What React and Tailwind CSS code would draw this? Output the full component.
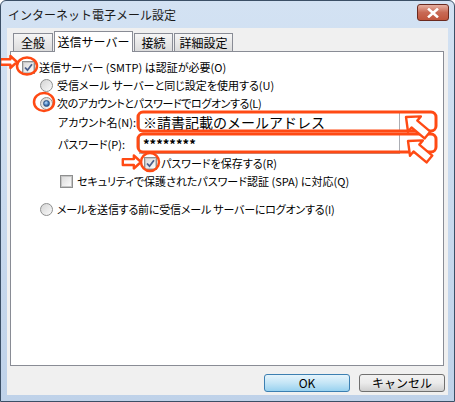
import React from 'react';

const ORANGE = '#ff4a14';

function Check({ checked }) {
  return (
    <span className="relative flex h-[13px] w-[13px] shrink-0 items-center justify-center border border-[#8e8f8f] bg-white">
      <span className="flex h-[11px] w-[11px] items-center justify-center border border-[#c6c6c6] bg-gradient-to-br from-[#dcdcdc] to-[#fbfbfb]">
        {checked && (
          <svg width="9" height="9" viewBox="0 0 9 9">
            <path d="M1 4.5 L3.5 7.2 L8 1.2" fill="none" stroke="#4a5f8c" strokeWidth="1.8" />
          </svg>
        )}
      </span>
    </span>
  );
}

function Radio({ checked }) {
  return (
    <span className="flex h-[13px] w-[13px] shrink-0 items-center justify-center rounded-full border border-[#8e8f8f] bg-gradient-to-br from-[#d4d4d4] to-[#fafafa]">
      {checked && (
        <span className="h-[7px] w-[7px] rounded-full border border-[#2a4f80] bg-[radial-gradient(circle_at_40%_35%,#bfe0ff,#3f78b8_55%,#1c3d66)]" />
      )}
    </span>
  );
}

function Arrow({ x, y, rot, s = 1 }) {
  return (
    <g transform={`translate(${x},${y}) rotate(${rot}) scale(${s})`}>
      <polygon
        points="0,0 11,-10 11,-4.5 28,-4.5 28,4.5 11,4.5 11,10"
        fill="#fff"
        stroke={ORANGE}
        strokeWidth={2.4 / s}
        strokeLinejoin="round"
      />
    </g>
  );
}

export default function App() {
  const jp = "font-['Noto_Sans_CJK_JP',sans-serif]";
  return (
    <div className={`relative h-[402px] w-[455px] overflow-hidden rounded-t-[6px] border border-[#3b4f66] bg-gradient-to-b from-[#d3e2f3] to-[#bfd2e9] ${jp} text-black`}>
      <div className="flex h-[27px] items-center justify-between pl-[7px] pr-[5px]">
        <span className="text-[12px] text-[#1a1a1a]">インターネット電子メール設定</span>
        <div className="mt-[-4px] flex h-[17px] w-[32px] items-center justify-center rounded-[3px] border border-[#6b2a1f] bg-gradient-to-b from-[#e6b0a2] via-[#c86a55] to-[#c0553c]">
          <svg width="12" height="10" viewBox="0 0 12 10">
            <path d="M2 1.5 L10 8.5 M10 1.5 L2 8.5" stroke="#fff" strokeWidth="2.6" strokeLinecap="square" />
          </svg>
        </div>
      </div>

      <div className="mx-[6px] flex h-[367px] flex-col bg-[#f0f0f0]">
        <div className="mt-[3px] flex items-end pl-[6px] text-[12px]">
          <div className="flex h-[18px] w-[40px] items-center justify-center border border-b-0 border-[#898c95] bg-gradient-to-b from-[#f5f5f5] to-[#dcdcdc]">全般</div>
          <div className="relative z-10 -mb-px ml-px flex h-[21px] w-[79px] items-start justify-center border border-b-0 border-[#898c95] bg-white pt-[1px]">送信サーバー</div>
          <div className="ml-px flex h-[18px] w-[39px] items-center justify-center border border-b-0 border-[#898c95] bg-gradient-to-b from-[#f5f5f5] to-[#dcdcdc]">接続</div>
          <div className="ml-px flex h-[18px] w-[59px] items-center justify-center border border-b-0 border-[#898c95] bg-gradient-to-b from-[#f5f5f5] to-[#dcdcdc]">詳細設定</div>
        </div>

        <div className="ml-[3px] flex h-[315px] w-[434px] flex-col whitespace-nowrap border border-[#898c95] bg-white pl-[11px] pt-[6px] text-[11px] [font-feature-settings:'palt']">
          <div className="flex h-[18px] items-center gap-[4px]">
            <Check checked />
            <span>送信サーバー (SMTP) は認証が必要(O)</span>
          </div>
          <div className="flex h-[18px] items-center gap-[4px] pl-[18px]">
            <Radio />
            <span>受信メール サーバーと同じ設定を使用する(U)</span>
          </div>
          <div className="flex h-[18px] items-center gap-[4px] pl-[18px]">
            <Radio checked />
            <span className="tracking-[-0.4px]">次のアカウントとパスワードでログオンする(L)</span>
          </div>
          <div className="flex h-[20px] items-center pl-[36px]">
            <span className="w-[81px]">アカウント名(N):</span>
            <div className="flex h-[20px] w-[261px] items-center border border-[#abadb3] bg-white pl-[3px] text-[14px] [font-feature-settings:normal]">
              ※請書記載のメールアドレス
            </div>
          </div>
          <div className="mt-[2px] flex h-[20px] items-center pl-[36px]">
            <span className="w-[81px]">パスワード(P):</span>
            <div className="flex h-[20px] w-[261px] items-center border border-[#abadb3] bg-white pl-[3px] text-[13px] font-bold">
              ********
            </div>
          </div>
          <div className="flex h-[18px] items-center gap-[4px] pl-[122px]">
            <Check checked />
            <span>パスワードを保存する(R)</span>
          </div>
          <div className="flex h-[18px] items-center gap-[4px] pl-[38px]">
            <Check />
            <span>セキュリティで保護されたパスワード認証 (SPA) に対応(Q)</span>
          </div>
          <div className="mt-[10px] flex h-[18px] items-center gap-[4px] pl-[18px]">
            <Radio />
            <span className="tracking-[-0.2px]">メールを送信する前に受信メール サーバーにログオンする(I)</span>
          </div>
        </div>

        <div className="mt-[8px] flex justify-end gap-[9px] pr-[3px] text-[12px]">
          <button className="flex h-[18px] w-[86px] items-center justify-center rounded-[3px] border border-[#3c7fb1] bg-gradient-to-b from-[#e5f4fc] via-[#c4e5f6] to-[#98d1ef]">OK</button>
          <button className="flex h-[18px] w-[86px] items-center justify-center rounded-[3px] border border-[#707070] bg-gradient-to-b from-[#f2f2f2] via-[#ebebeb] to-[#cfcfcf]">キャンセル</button>
        </div>
      </div>

      <svg className="pointer-events-none absolute left-[-1px] top-[-1px]" width="455" height="402">
        <ellipse cx="27" cy="66" rx="10" ry="8.5" fill="none" stroke={ORANGE} strokeWidth="2.5" />
        <Arrow x={17} y={62} rot={180} s={0.6} />
        <ellipse cx="44" cy="102" rx="10" ry="9" fill="none" stroke={ORANGE} strokeWidth="2.5" />
        <rect x="138" y="112" width="298" height="19" rx="5" fill="none" stroke={ORANGE} strokeWidth="3" />
        <rect x="138" y="134" width="298" height="18" rx="5" fill="none" stroke={ORANGE} strokeWidth="3" />
        <Arrow x={406} y={117} rot={40} />
        <Arrow x={408} y={141} rot={40} />
        <ellipse cx="150" cy="162" rx="9" ry="9" fill="none" stroke={ORANGE} strokeWidth="2.5" />
        <Arrow x={141} y={162} rot={180} s={0.65} />
      </svg>
    </div>
  );
}
